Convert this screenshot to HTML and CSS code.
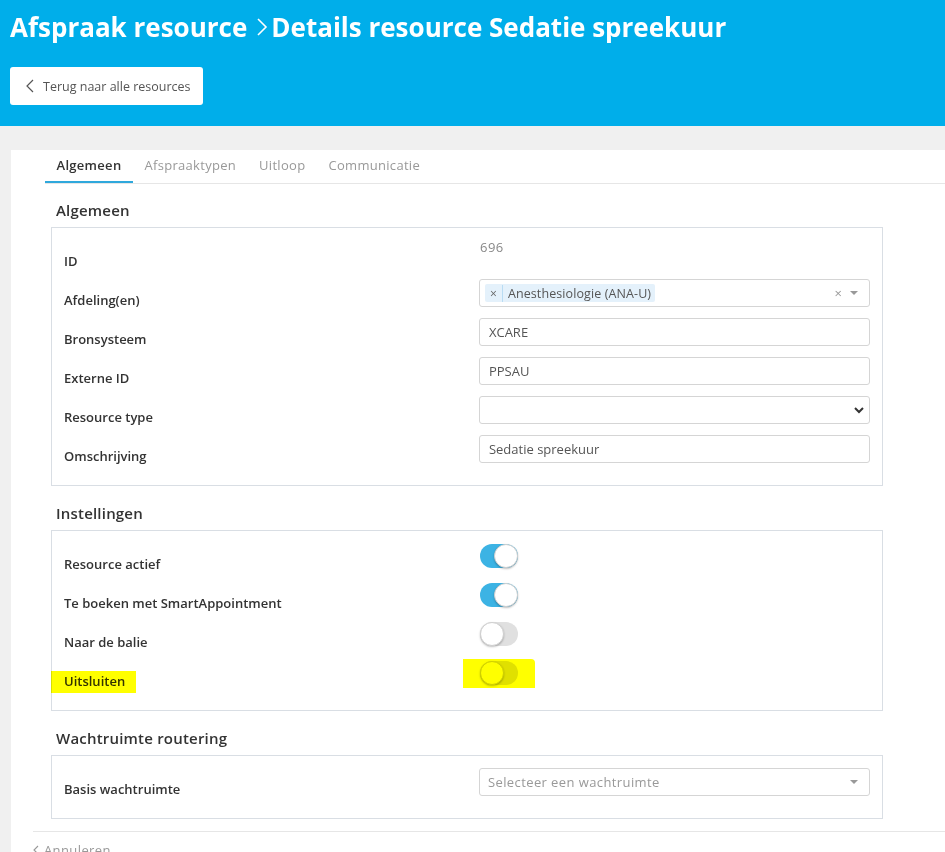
FILE: index.html
```html
<!DOCTYPE html>
<html lang="nl">
<head>
    <meta charset="UTF-8">
    <meta name="viewport" content="width=device-width, initial-scale=1.0">
    <title>Details resource</title>
    <link rel="stylesheet" href="styles.css">
</head>
<body>
    <header class="top-bar">
        <h1 class="page-title">
            <span>Afspraak resource</span>
            <svg class="crumb-sep" width="12" height="20" viewBox="0 0 12 20"><path d="M2 2 L10 10 L2 18" fill="none" stroke="#fff" stroke-width="1.6"/></svg>
            <span>Details resource Sedatie spreekuur</span>
        </h1>
        <button class="back-button">
            <svg width="8" height="14" viewBox="0 0 8 14"><path d="M7 1 L1 7 L7 13" fill="none" stroke="#555" stroke-width="1.2"/></svg>
            Terug naar alle resources
        </button>
    </header>

    <main class="panel">
        <nav class="tabs">
            <a class="tab active">Algemeen</a>
            <a class="tab">Afspraaktypen</a>
            <a class="tab">Uitloop</a>
            <a class="tab">Communicatie</a>
        </nav>

        <div class="content">
            <section class="section">
                <h2>Algemeen</h2>
                <div class="box">
                    <div class="form-row">
                        <label>ID</label>
                        <div class="static-value">696</div>
                    </div>
                    <div class="form-row">
                        <label>Afdeling(en)</label>
                        <div class="field multi-select">
                            <span class="tag"><span class="tag-remove">×</span>Anesthesiologie (ANA-U)</span>
                            <span class="clear">×</span>
                            <span class="caret"></span>
                        </div>
                    </div>
                    <div class="form-row">
                        <label>Bronsysteem</label>
                        <div class="field">XCARE</div>
                    </div>
                    <div class="form-row">
                        <label>Externe ID</label>
                        <div class="field">PPSAU</div>
                    </div>
                    <div class="form-row">
                        <label>Resource type</label>
                        <div class="field native-select">
                            <svg width="10" height="7" viewBox="0 0 10 7"><path d="M1 1 L5 5 L9 1" fill="none" stroke="#333" stroke-width="2"/></svg>
                        </div>
                    </div>
                    <div class="form-row">
                        <label>Omschrijving</label>
                        <div class="field">Sedatie spreekuur</div>
                    </div>
                </div>
            </section>

            <section class="section">
                <h2>Instellingen</h2>
                <div class="box">
                    <div class="form-row">
                        <label>Resource actief</label>
                        <span class="toggle on"></span>
                    </div>
                    <div class="form-row">
                        <label>Te boeken met SmartAppointment</label>
                        <span class="toggle on"></span>
                    </div>
                    <div class="form-row">
                        <label>Naar de balie</label>
                        <span class="toggle"></span>
                    </div>
                    <div class="form-row">
                        <label><span class="marked">Uitsluiten</span></label>
                        <span class="toggle marked-toggle"></span>
                    </div>
                </div>
            </section>

            <section class="section">
                <h2>Wachtruimte routering</h2>
                <div class="box">
                    <div class="form-row">
                        <label>Basis wachtruimte</label>
                        <div class="field multi-select placeholder">
                            Selecteer een wachtruimte
                            <span class="caret"></span>
                        </div>
                    </div>
                </div>
            </section>
        </div>

        <footer class="form-footer">
            <a class="cancel">
                <svg width="6" height="10" viewBox="0 0 6 10"><path d="M5 1 L1 5 L5 9" fill="none" stroke="#999" stroke-width="1.1"/></svg>
                Annuleren
            </a>
        </footer>
    </main>
</body>
</html>
```

FILE: styles.css
```css
body {
    margin: 0;
    font-family: 'Open Sans', 'Liberation Sans', sans-serif;
    background-color: #f0f0f0;
    color: #333;
    overflow: hidden;
}

.top-bar {
    background-color: #00aeea;
    height: 126px;
    box-sizing: border-box;
    padding: 12px 10px 0;
}

.page-title {
    margin: 0;
    color: #fff;
    font-size: 26px;
    font-weight: 700;
    line-height: 30px;
    display: flex;
    align-items: center;
    gap: 3px;
}

.crumb-sep {
    margin-left: 6px;
}

.back-button {
    margin-top: 25px;
    height: 38px;
    width: 193px;
    display: flex;
    align-items: center;
    gap: 9px;
    padding: 0 0 0 16px;
    background-color: #fff;
    border: none;
    border-radius: 3px;
    font-family: inherit;
    font-size: 12.5px;
    color: #555;
}

.panel {
    background-color: #fff;
    margin: 24px 0 0 11px;
    min-height: 720px;
}

.tabs {
    display: flex;
    margin-left: 34px;
    border-bottom: 1px solid #e6e6e6;
    height: 33px;
}

.tab {
    padding: 0 11.5px;
    font-size: 13px;
    line-height: 30px;
    color: #999;
    letter-spacing: 0.3px;
    border-bottom: 2px solid transparent;
}

.tab.active {
    color: #333;
    font-weight: 600;
    border-bottom-color: #2fa8dc;
}

.content {
    padding: 16px 0 0 40px;
    width: 832px;
}

.section {
    margin-bottom: 17px;
}

.section:last-child {
    margin-bottom: 0;
}

.section h2 {
    margin: 0 0 7px 5px;
    font-size: 15px;
    font-weight: 600;
    line-height: 20px;
    color: #333;
    letter-spacing: 0.2px;
}

.box {
    border: 1px solid #d9dee4;
    padding: 12px 12px 22px;
}

.form-row {
    display: flex;
    align-items: flex-start;
    height: 28px;
    margin-bottom: 11px;
}

.form-row:last-child {
    margin-bottom: 0;
}

.form-row label {
    width: 416px;
    height: 28px;
    box-sizing: border-box;
    padding-top: 12px;
    font-size: 13px;
    font-weight: 600;
    line-height: 18px;
    color: #333;
}

.static-value {
    font-size: 13px;
    color: #888;
    line-height: 14px;
    letter-spacing: 0.5px;
}

.field {
    position: relative;
    width: 392px;
    height: 28px;
    box-sizing: border-box;
    border: 1px solid #d5d5d5;
    border-radius: 3px;
    padding: 0 9px;
    display: flex;
    align-items: center;
    font-size: 13px;
    color: #555;
}

.multi-select {
    padding-left: 5px;
}

.tag {
    display: flex;
    align-items: center;
    height: 18px;
    background-color: #e4f1fb;
    border-radius: 2px;
    padding-right: 4px;
    color: #555;
    font-size: 12.5px;
    letter-spacing: 0.1px;
}

.tag-remove {
    padding: 0 5px;
    margin-right: 5px;
    border-right: 1px solid #b9dcf3;
    font-size: 12px;
    color: #666;
}

.clear {
    margin-left: auto;
    margin-right: 8px;
    color: #999;
    font-size: 13px;
}

.caret {
    width: 0;
    height: 0;
    border-left: 4px solid transparent;
    border-right: 4px solid transparent;
    border-top: 4px solid #999;
    margin-right: 2px;
}

.placeholder {
    padding-left: 8px;
    color: #999;
    letter-spacing: 0.4px;
    justify-content: space-between;
}

.native-select {
    justify-content: flex-end;
    padding-right: 5px;
}

.toggle {
    position: relative;
    flex: none;
    width: 38px;
    height: 24px;
    margin-top: 1px;
    border-radius: 12px;
    background-color: #e0e0e0;
}

.toggle::after {
    content: "";
    position: absolute;
    top: 0;
    left: 0;
    width: 24px;
    height: 24px;
    box-sizing: border-box;
    border-radius: 50%;
    background-color: #fff;
    border: 1px solid #d0d0d0;
    box-shadow: 0 1px 2px rgba(0, 0, 0, 0.25);
}

.toggle.on {
    background-color: #3cb3e4;
}

.toggle.on::after {
    left: 14px;
}

.marked {
    position: relative;
}

.marked::before {
    content: "";
    position: absolute;
    left: -13px;
    right: -11px;
    top: -1px;
    bottom: -3px;
    background-color: #ffff00;
    mix-blend-mode: multiply;
}

.marked-toggle::before {
    content: "";
    position: absolute;
    left: -17px;
    top: -2px;
    width: 72px;
    height: 29px;
    background-color: #ffff00;
    border-radius: 0 4px 0 0;
    z-index: 2;
    mix-blend-mode: multiply;
}

.form-footer {
    margin: 12px 0 0 22px;
    border-top: 1px solid #e6e6e6;
    padding-top: 9px;
}

.cancel {
    display: flex;
    align-items: center;
    gap: 5px;
    font-size: 13px;
    color: #999;
    letter-spacing: 0.4px;
}
```
